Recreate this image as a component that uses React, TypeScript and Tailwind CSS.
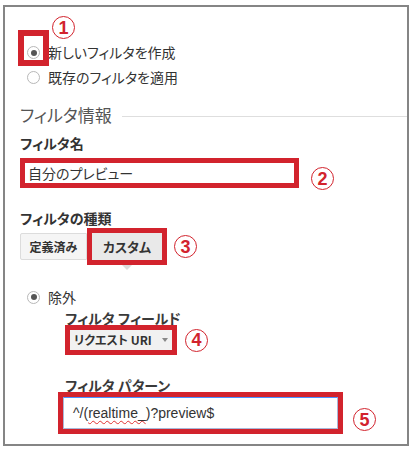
import React from "react";

function Mark({ n }: { n: string }) {
  return (
    <span className="flex h-[23px] w-[23px] items-center justify-center rounded-full border-[1.5px] border-[#d2232d] font-['Liberation_Sans',sans-serif] text-[18px] font-bold leading-none text-[#d2232d]">
      {n}
    </span>
  );
}

function Radio({ checked }: { checked?: boolean }) {
  return (
    <span className="flex h-[13px] w-[13px] items-center justify-center rounded-full border border-[#b8b8b8] bg-white">
      {checked && <span className="h-[6px] w-[6px] rounded-full bg-[#555]" />}
    </span>
  );
}

export default function App() {
  return (
    <div className="min-h-[452px] bg-white pl-[3px] pt-[5px]">
      <div className="h-[441px] w-[406px] border-2 border-[#858585] pl-[15px] pt-[33px] font-['Noto_Sans_CJK_JP',sans-serif] text-[#333] [font-feature-settings:'palt']">
        {/* 1: new filter */}
        <div className="flex h-[25px] items-center">
          <div className="relative ml-[7px]">
            <Radio checked />
            <span className="absolute left-[-9px] top-[-16px] h-[36px] w-[31px] border-[6px] border-[#d2232d]" />
            <span className="absolute left-[25px] top-[-30px]">
              <Mark n="1" />
            </span>
          </div>
          <span className="ml-[8px] text-[14px]">新しいフィルタを作成</span>
        </div>
        <div className="flex h-[25px] items-center">
          <div className="ml-[7px]">
            <Radio />
          </div>
          <span className="ml-[8px] text-[14px]">既存のフィルタを適用</span>
        </div>

        {/* section heading */}
        <div className="mt-[10px] flex h-[30px] items-center">
          <span className="text-[17px] text-[#555]">フィルタ情報</span>
          <span className="ml-[10px] mt-[3px] h-px flex-1 bg-[#dedede]" />
        </div>

        {/* 2: filter name */}
        <div className="mt-[3px] flex h-[20px] items-center text-[14px] font-bold">フィルタ名</div>
        <div className="mt-[5px] flex items-start">
          <div className="flex h-[30px] w-[279px] items-center border-[5px] border-[#d2232d] bg-white pl-[3px] text-[14px]">
            自分のプレビュー
          </div>
          <span className="ml-[12px] mt-[9px]">
            <Mark n="2" />
          </span>
        </div>

        {/* 3: filter type */}
        <div className="mt-[18px] flex h-[20px] items-center text-[14px] font-bold">フィルタの種類</div>
        <div className="flex h-[37px] items-center">
          <div className="flex h-[27px] w-[67px] items-center justify-center rounded-l-[2px] border border-[#dcdcdc] bg-[#f5f5f5] text-[12px] font-bold">
            定義済み
          </div>
          <div className="relative border-[5px] border-[#d2232d]">
            <div className="flex h-[27px] w-[70px] items-center justify-center bg-[#e9e9e9] text-[13px] font-bold">
              カスタム
            </div>
            <span className="absolute left-1/2 top-[calc(100%+5px)] h-0 w-0 -translate-x-1/2 border-x-[5px] border-t-[5px] border-x-transparent border-t-[#dcdcdc]" />
          </div>
          <span className="ml-[7px]">
            <Mark n="3" />
          </span>
        </div>

        {/* exclude */}
        <div className="mt-[22px] flex h-[20px] items-center">
          <div className="ml-[7px]">
            <Radio checked />
          </div>
          <span className="ml-[8px] text-[14px]">除外</span>
        </div>

        <div className="ml-[45px]">
          {/* 4: filter field */}
          <div className="mt-[4px] flex h-[14px] items-center text-[14px] font-bold text-[#3a3a3a]">フィルタ フィールド</div>
          <div className="flex items-center">
            <div className="flex h-[30px] w-[112px] items-center justify-between border-[5px] border-[#d2232d] bg-[#f1f1f1] pl-[4px] pr-[4px]">
              <span className="text-[12px] font-bold">リクエスト URI</span>
              <span className="h-0 w-0 border-x-[3.5px] border-t-[4px] border-x-transparent border-t-[#888]" />
            </div>
            <span className="ml-[8px]">
              <Mark n="4" />
            </span>
          </div>

          {/* 5: filter pattern */}
          <div className="mt-[23px] flex h-[14px] items-center text-[14px] font-bold text-[#3a3a3a]">フィルタ パターン</div>
          <div className="ml-[-7px] flex items-start">
            <div className="h-[42px] w-[285px] border-[5px] border-[#d2232d] bg-white">
              <div className="flex h-full items-center border border-[#a9b8d9] border-t-[#4d90fe] pl-[9px] font-['Liberation_Sans',sans-serif] text-[14px] text-[#333]">
                ^/(<span className="underline decoration-[#e03030] decoration-wavy decoration-1 underline-offset-2">realtime_</span>)?preview$
              </div>
            </div>
            <span className="ml-[10px] mt-[16px]">
              <Mark n="5" />
            </span>
          </div>
        </div>
      </div>
    </div>
  );
}
